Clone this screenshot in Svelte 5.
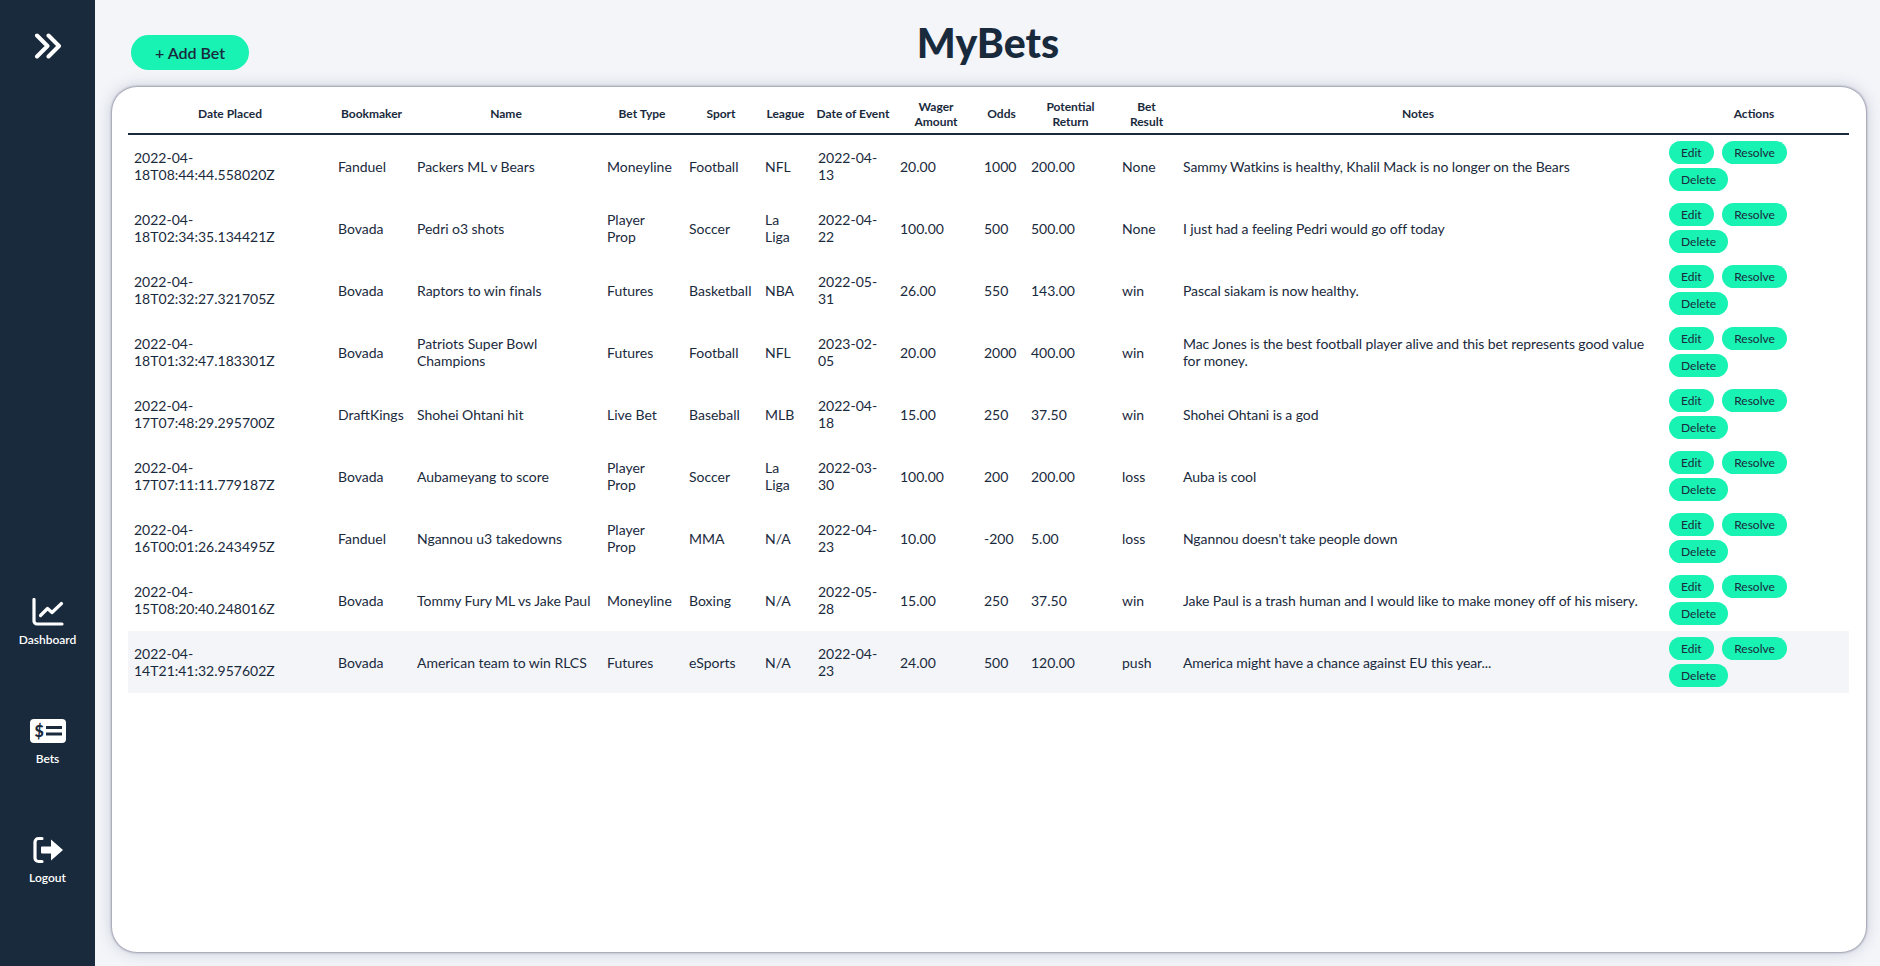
<script lang="ts">
  const columns = [
    ['Date Placed', 204], ['Bookmaker', 79], ['Name', 190], ['Bet Type', 82], ['Sport', 76], ['League', 53],
    ['Date of Event', 82], ['Wager Amount', 84], ['Odds', 47], ['Potential Return', 91, 'wrap'], ['Bet Result', 61, 'wrap'],
    ['Notes', 482], ['Actions', 190]
  ];

  const bets = [
    ['2022-04-18T08:44:44.558020Z', 'Fanduel', 'Packers ML v Bears', 'Moneyline', 'Football', 'NFL', '2022-04-13', '20.00', '1000', '200.00', 'None', 'Sammy Watkins is healthy, Khalil Mack is no longer on the Bears'],
    ['2022-04-18T02:34:35.134421Z', 'Bovada', 'Pedri o3 shots', 'Player Prop', 'Soccer', 'La Liga', '2022-04-22', '100.00', '500', '500.00', 'None', 'I just had a feeling Pedri would go off today'],
    ['2022-04-18T02:32:27.321705Z', 'Bovada', 'Raptors to win finals', 'Futures', 'Basketball', 'NBA', '2022-05-31', '26.00', '550', '143.00', 'win', 'Pascal siakam is now healthy.'],
    ['2022-04-18T01:32:47.183301Z', 'Bovada', 'Patriots Super Bowl Champions', 'Futures', 'Football', 'NFL', '2023-02-05', '20.00', '2000', '400.00', 'win', 'Mac Jones is the best football player alive and this bet represents good value for money.'],
    ['2022-04-17T07:48:29.295700Z', 'DraftKings', 'Shohei Ohtani hit', 'Live Bet', 'Baseball', 'MLB', '2022-04-18', '15.00', '250', '37.50', 'win', 'Shohei Ohtani is a god'],
    ['2022-04-17T07:11:11.779187Z', 'Bovada', 'Aubameyang to score', 'Player Prop', 'Soccer', 'La Liga', '2022-03-30', '100.00', '200', '200.00', 'loss', 'Auba is cool'],
    ['2022-04-16T00:01:26.243495Z', 'Fanduel', 'Ngannou u3 takedowns', 'Player Prop', 'MMA', 'N/A', '2022-04-23', '10.00', '-200', '5.00', 'loss', "Ngannou doesn't take people down"],
    ['2022-04-15T08:20:40.248016Z', 'Bovada', 'Tommy Fury ML vs Jake Paul', 'Moneyline', 'Boxing', 'N/A', '2022-05-28', '15.00', '250', '37.50', 'win', 'Jake Paul is a trash human and I would like to make money off of his misery.'],
    ['2022-04-14T21:41:32.957602Z', 'Bovada', 'American team to win RLCS', 'Futures', 'eSports', 'N/A', '2022-04-23', '24.00', '500', '120.00', 'push', 'America might have a chance against EU this year...']
  ];
</script>

<div class="layout">
  <nav class="sidebar">
    <svg class="toggle" viewBox="0 0 28 26" width="28" height="26" fill="none" stroke="#fff" stroke-width="4" stroke-linecap="round" stroke-linejoin="round">
      <path d="M3 2.500l10.500 10.500l-10.500 10.500" />
      <path d="M14.500 2.500l10.500 10.500l-10.500 10.500" />
    </svg>
    <div class="nav-items">
      <a class="nav-item dash" href="#dashboard">
        <svg viewBox="0 0 32 28" width="32" height="28" fill="none" stroke="#fff" stroke-width="3.200" stroke-linecap="round" stroke-linejoin="round">
          <path d="M2 1.500v21.500a3 3 0 0 0 3 3h25" />
          <path d="M8.500 17.500l7-7l4.500 4l9.500-9" />
        </svg>
        <span>Dashboard</span>
      </a>
      <a class="nav-item bets" href="#bets">
        <svg viewBox="0 0 36 24" width="36" height="24">
          <rect width="36" height="24" rx="4" fill="#fff" />
          <rect x="16" y="7" width="16" height="3" fill="#1a2a3d" />
          <rect x="16" y="13.500" width="16" height="3" fill="#1a2a3d" />
          <text x="4.500" y="18" font-family="Lato" font-weight="900" font-size="16" fill="#1a2a3d">$</text>
        </svg>
        <span>Bets</span>
      </a>
      <a class="nav-item logout" href="#logout">
        <svg viewBox="0 0 32 28" width="32" height="28">
          <path d="M10 2.500H6.500a3.500 3.500 0 0 0-3.500 3.500v16a3.500 3.500 0 0 0 3.500 3.500H10" fill="none" stroke="#fff" stroke-width="3.200" stroke-linecap="round" />
          <path d="M10 10.500h9V3.500l12 10.500l-12 10.500v-7h-9a1 1 0 0 1-1-1v-5a1 1 0 0 1 1-1z" fill="#fff" />
        </svg>
        <span>Logout</span>
      </a>
    </div>
  </nav>

  <main class="content">
    <header class="top">
      <button class="add">+ Add Bet</button>
      <h1>MyBets</h1>
    </header>
    <section class="card">
      <table>
        <colgroup>
          {#each columns as col}
            <col style="width: {col[1]}px" />
          {/each}
        </colgroup>
        <thead>
          <tr>
            {#each columns as col}
              <th class:wrap={col[2] === 'wrap'}>{col[0]}</th>
            {/each}
          </tr>
        </thead>
        <tbody>
          {#each bets as bet, i}
            <tr class:hovered={i === bets.length - 1}>
              {#each bet as value, c}
                <td class:name={c === 2} class:notes={c === 11}>{value}</td>
              {/each}
              <td class="actions">
                <button>Edit</button>
                <button>Resolve</button>
                <button>Delete</button>
              </td>
            </tr>
          {/each}
        </tbody>
      </table>
    </section>
  </main>
</div>

<style>
  :global(body) {
    margin: 0;
    background: #f3f5f9;
    font-family: Lato, "Liberation Sans", sans-serif;
    color: #1a2a3d;
  }

  .layout {
    display: flex;
    height: 966px;
    overflow: hidden;
  }

  .sidebar {
    flex: 0 0 95px;
    background: #1a2a3d;
    display: flex;
    flex-direction: column;
    align-items: center;
    position: relative;
  }

  .toggle {
    margin-top: 33px;
  }

  .nav-items {
    display: flex;
    flex-direction: column;
    align-items: center;
    margin-top: 539px;
  }

  .nav-item {
    display: flex;
    flex-direction: column;
    align-items: center;
    color: #fff;
    text-decoration: none;
    font-size: 12px;
    font-weight: 600;
    height: 119px;
    gap: 6px;
  }

  .nav-item span {
    line-height: 15px;
  }

  .nav-item.bets {
    padding-top: 2px;
    height: 117px;
    gap: 8px;
  }

  .content {
    flex: 1;
    min-width: 0;
    padding: 0 14px 14px 17px;
    display: flex;
    flex-direction: column;
  }

  .top {
    height: 87px;
    position: relative;
    display: flex;
    justify-content: center;
  }

  h1 {
    margin: 16px 0 0;
    font-size: 41px;
    line-height: 54px;
    font-weight: 900;
    padding-right: 2px;
  }

  .add {
    position: absolute;
    left: 19px;
    top: 35px;
    width: 118px;
    height: 35px;
    border: none;
    border-radius: 18px;
    background: #18f2b2;
    color: #1a2a3d;
    font: 600 16px Lato, sans-serif;
    padding: 0;
  }

  .card {
    flex: 1;
    background: #fff;
    border-radius: 25px;
    box-shadow: 0 0 2px 1px rgba(70, 70, 100, 0.45), 0 0 16px rgba(40, 50, 90, 0.22);
    padding: 0 16px;
  }

  table {
    table-layout: fixed;
    width: 1721px;
    border-collapse: collapse;
    font-size: 14px;
    line-height: 17px;
  }

  th {
    font-size: 12px;
    font-weight: 700;
    line-height: 15px;
    height: 47px;
    padding: 7px 2px 0;
    border-bottom: 2px solid #1a2a3d;
    box-sizing: border-box;
    text-align: center;
    vertical-align: middle;
  }

  th.wrap {
    padding: 7px 8px 0;
  }

  td {
    height: 62px;
    padding: 0 6px;
    box-sizing: border-box;
    vertical-align: middle;
  }

  td.name {
    letter-spacing: -0.04px;
  }

  td.notes {
    letter-spacing: -0.09px;
  }

  tr.hovered td {
    background: #f3f5f9;
  }

  td.actions {
    padding: 4px 0 4px 10px;
    line-height: 0;
  }

  .actions button {
    height: 23px;
    padding: 0 12px;
    margin: 2px 5px 2px 0;
    border: none;
    border-radius: 12px;
    background: #18f2b2;
    color: #1a2a3d;
    font: 400 12px/23px Lato, sans-serif;
  }
</style>
